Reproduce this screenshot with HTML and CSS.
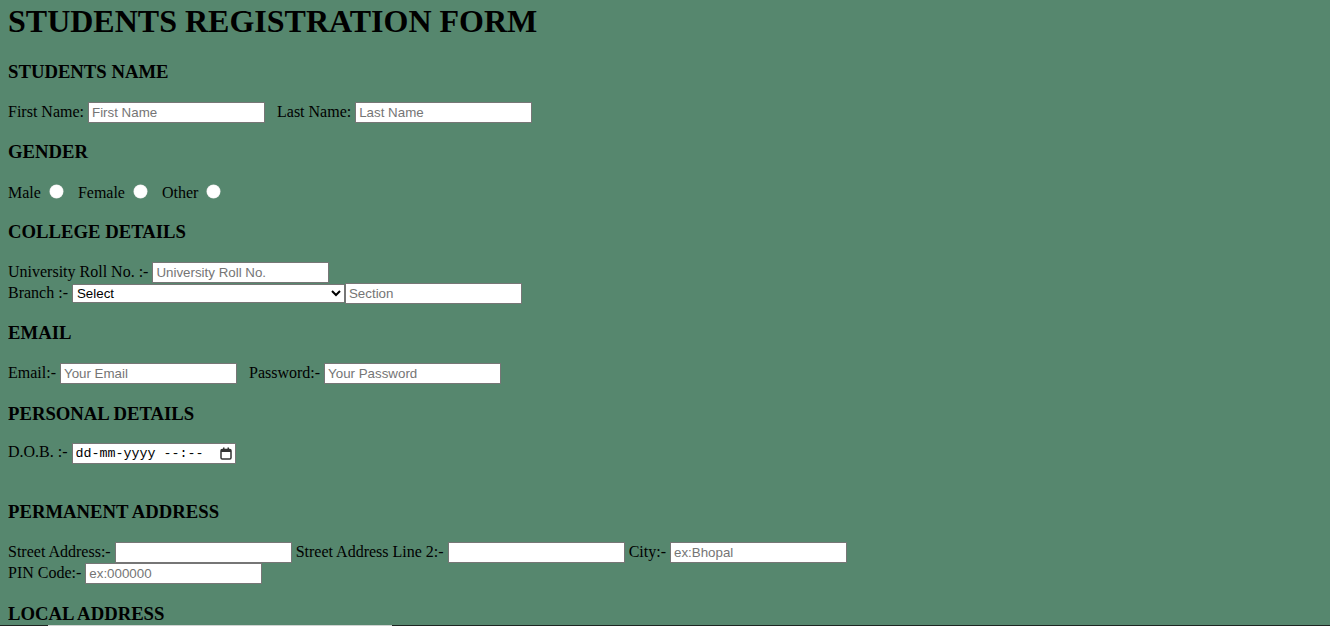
FILE: index.html
```html
<!DOCTYPE html>
<html>
<head>
<meta charset="utf-8">
<title>Students Registration Form</title>
<link rel="stylesheet" href="styles.css">
</head>
<body>
<form class="reg-form">
<h1 class="title">STUDENTS REGISTRATION FORM</h1>

<h3 class="section">STUDENTS NAME</h3>
<div class="row">First Name: <input class="field" type="text" placeholder="First Name">&nbsp;&nbsp; Last Name: <input class="field" type="text" placeholder="Last Name"></div>

<h3 class="section">GENDER</h3>
<div class="row">Male <input class="radio" type="radio" name="gender">&nbsp;&nbsp; Female <input class="radio" type="radio" name="gender">&nbsp;&nbsp; Other <input class="radio" type="radio" name="gender"></div>

<h3 class="section">COLLEGE DETAILS</h3>
<div class="row">University Roll No. :- <input class="field" type="text" placeholder="University Roll No."><br>
Branch :- <select class="branch"><option>Select</option><option>Computer Science</option><option>Information Technology</option><option>Mechanical</option></select><input class="field" type="text" placeholder="Section"></div>

<h3 class="section">EMAIL</h3>
<div class="row">Email:- <input class="field" type="email" placeholder="Your Email">&nbsp;&nbsp; Password:- <input class="field" type="password" placeholder="Your Password"></div>

<h3 class="section">PERSONAL DETAILS</h3>
<div class="row">D.O.B. :- <span class="dob-wrap"><input class="dob" type="text" placeholder="dd-mm-yyyy --:--"><svg class="cal" width="12" height="13" viewBox="0 0 12 13"><rect x="1" y="2.5" width="10" height="9.5" rx="1.2" fill="none" stroke="#333" stroke-width="1.5"/><rect x="1" y="2.5" width="10" height="2.5" fill="#333"/><rect x="3" y="0.5" width="1.5" height="2.5" fill="#333"/><rect x="7.5" y="0.5" width="1.5" height="2.5" fill="#333"/></svg></span><br><br></div>

<h3 class="section">PERMANENT ADDRESS</h3>
<div class="row">Street Address:- <input class="field" type="text"> Street Address Line 2:- <input class="field" type="text"> City:- <input class="field" type="text" placeholder="ex:Bhopal"><br>
PIN Code:- <input class="field" type="text" placeholder="ex:000000"></div>

<h3 class="section">LOCAL ADDRESS</h3>
<div class="row">Street Address:- <input class="field" type="text"> Street Address Line 2:- <input class="field" type="text"> City:- <input class="field" type="text" placeholder="ex:Bhopal"><br>
PIN Code:- <input class="field" type="text" placeholder="ex:000000"></div>
</form>
<div class="edge"><div class="edge-thumb"></div></div>
</body>
</html>
```
FILE: styles.css
```css
html, body {
  background: #56876e;
}
body {
  margin: 2.5px 8px 8px;
  font-family: "Liberation Serif", "Times New Roman", serif;
  color: #000;
}
.title {
  margin: 0 0 21.44px;
  font-size: 32px;
}
.section {
  font-size: 18.72px;
  margin: 18.72px 0;
}
.row {
  font-size: 16px;
}
.field {
  box-sizing: border-box;
  width: 177px;
  height: 21px;
  padding: 1px 3px;
  border: 1px solid #767676;
  background: #fff;
  font-family: "Liberation Sans", Arial, sans-serif;
  font-size: 13.33px;
  color: #000;
}
.field::placeholder {
  color: #757575;
}
.radio {
  appearance: none;
  -webkit-appearance: none;
  width: 13px;
  height: 13px;
  margin: 3px 3px 0 5px;
  border-radius: 50%;
  background: #fff;
  border: none;
  box-shadow: 0 0 0 0.5px #e8e8e8;
}
.branch {
  width: 273px;
  font-family: "Liberation Sans", Arial, sans-serif;
  font-size: 13.33px;
}
.dob-wrap {
  position: relative;
  display: inline-block;
}
.dob {
  box-sizing: border-box;
  width: 164px;
  height: 21px;
  padding: 1px 3px;
  border: 1px solid #767676;
  background: #fff;
  font-family: "Liberation Mono", "Courier New", monospace;
  font-size: 13.33px;
}
.dob::placeholder {
  color: #000;
}
.cal {
  position: absolute;
  right: 4px;
  top: 4px;
}
.edge {
  position: fixed;
  left: 0;
  right: 0;
  bottom: 0;
  height: 1px;
  background: #1e2622;
}
.edge-thumb {
  margin-left: 48px;
  width: 344px;
  height: 1px;
  background: #cfd3d1;
}
```
